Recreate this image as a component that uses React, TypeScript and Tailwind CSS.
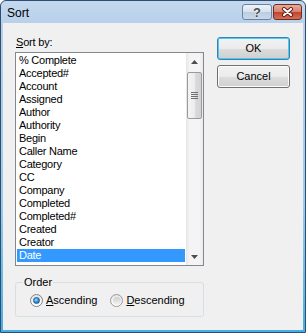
const fields = [
  "% Complete",
  "Accepted#",
  "Account",
  "Assigned",
  "Author",
  "Authority",
  "Begin",
  "Caller Name",
  "Category",
  "CC",
  "Company",
  "Completed",
  "Completed#",
  "Created",
  "Creator",
  "Date",
];

function TitleBar() {
  return (
    <div className="h-[22px] flex items-start justify-between pl-[6px] pr-[3px] pt-[3px]">
      <span className="text-[12px] leading-[16px] mt-[1px] text-black">Sort</span>
      <div className="flex gap-[1px]">
        {/* help */}
        <div className="w-[30px] h-[16px] rounded-[3px] border border-[#6b83a0] bg-[linear-gradient(to_bottom,#eef3f9_0%,#d5e1ee_50%,#bccde1_51%,#c9d9ea_100%)] flex items-center justify-center">
          <span className="text-[13px] leading-[13px] font-bold text-[#4a4a4a] [text-shadow:0_0_1px_#fff,0_0_2px_#fff]">?</span>
        </div>
        {/* close */}
        <div className="w-[29px] h-[16px] rounded-[3px] border border-[#6e2c22] bg-[linear-gradient(to_bottom,#e9a99b_0%,#d9806d_50%,#c0432a_51%,#d2705a_100%)] flex items-center justify-center">
          <svg width="13" height="10" viewBox="0 0 13 10">
            <path d="M3 2 L10 8 M10 2 L3 8" stroke="#5a1d14" strokeWidth="4" strokeLinecap="round" />
            <path d="M3 2 L10 8 M10 2 L3 8" stroke="#ffffff" strokeWidth="2.2" strokeLinecap="round" />
          </svg>
        </div>
      </div>
    </div>
  );
}

function Arrow({ up }: { up?: boolean }) {
  return (
    <div className="h-[17px] flex items-center justify-center">
      <svg width="7" height="4" viewBox="0 0 7 4">
        {up ? <path d="M0 4 L3.5 0 L7 4 Z" fill="#4d4d4d" /> : <path d="M0 0 L3.5 4 L7 0 Z" fill="#4d4d4d" />}
      </svg>
    </div>
  );
}

function ScrollBar() {
  return (
    <div className="w-[17px] flex flex-col bg-[linear-gradient(to_right,#e6e6e6_0%,#f4f4f4_20%,#f4f4f4_80%,#e9e9e9_100%)]">
      <Arrow up />
      <div className="flex-1 pt-[2px] px-[1px]">
        <div className="h-[47px] rounded-[2px] border border-[#9a9a9a] bg-[linear-gradient(to_right,#f4f4f4_0%,#ececec_50%,#dcdcdc_51%,#d2d2d2_100%)] flex flex-col items-center justify-center gap-[1px]">
          {[0, 1, 2, 3].map((i) => (
            <div key={i} className="w-[7px] h-[1px] bg-[#6f6f6f]" />
          ))}
        </div>
      </div>
      <Arrow />
    </div>
  );
}

function Radio({ checked, label, mnemonic }: { checked?: boolean; label: string; mnemonic: string }) {
  return (
    <div className="flex items-center gap-[3px]">
      <div
        className={
          checked
            ? "w-[13px] h-[13px] rounded-full border border-[#7d8590] bg-[linear-gradient(to_bottom,#e4e4e4,#ffffff)] flex items-center justify-center"
            : "w-[13px] h-[13px] rounded-full border border-[#9a9a9a] bg-[linear-gradient(to_bottom,#e6e6e6,#ffffff)] flex items-center justify-center"
        }
      >
        {checked ? (
          <div className="w-[7px] h-[7px] rounded-full border border-[#1a5a8e] bg-[radial-gradient(circle_at_40%_35%,#9fdcff_0%,#3b9be0_45%,#0f4f8a_100%)]" />
        ) : (
          <div className="w-[8px] h-[8px] rounded-full bg-[linear-gradient(to_bottom,#cfcfcf,#f4f4f4)]" />
        )}
      </div>
      <span className="text-[11px] leading-[13px]">
        <span className="underline underline-offset-[1px]">{mnemonic}</span>
        {label}
      </span>
    </div>
  );
}

export default function App() {
  return (
    <div className="w-[306px] h-[333px] flex flex-col border border-[#2e4f70] rounded-t-[6px] bg-[linear-gradient(to_bottom,#c4d9ef_0px,#b8d0ea_22px,#9ccbec_200px,#45ade6_100%)] font-['Liberation_Sans',Arial,sans-serif] text-black select-none">
      <TitleBar />
      <div className="flex-1 mx-[2px] mb-[2px] bg-[#f0f0f0] flex gap-[13px] pl-[12px] pr-[12px] pt-[13px]">
        {/* left column */}
        <div className="w-[189px] flex flex-col">
          <div className="text-[11px] leading-[13px] ml-[1px] tracking-[-0.2px]">
            <span className="underline underline-offset-[1px]">S</span>ort by:
          </div>
          <div className="mt-[3px] h-[214px] border border-[#828790] bg-white flex">
            <div className="flex-1 p-[1px] overflow-hidden">
              {fields.map((f) => (
                <div
                  key={f}
                  className={
                    f === "Date"
                      ? "h-[13px] px-[2px] text-[11px] leading-[13px] tracking-[-0.25px] whitespace-nowrap bg-[#3399ff] text-white"
                      : "h-[13px] px-[2px] text-[11px] leading-[13px] tracking-[-0.25px] whitespace-nowrap"
                  }
                >
                  {f}
                </div>
              ))}
            </div>
            <ScrollBar />
          </div>
          <fieldset className="mt-[10px] border border-[#d5dfe5] rounded-[3px] pl-[14px] pt-[5px] pb-[9px]">
            <legend className="-ml-[7px] px-[1px] text-[11px] leading-[13px]">Order</legend>
            <div className="flex gap-[13px]">
              <Radio checked mnemonic="A" label="scending" />
              <Radio mnemonic="D" label="escending" />
            </div>
          </fieldset>
        </div>
        {/* right column */}
        <div className="flex flex-col gap-[5px] pt-[1px]">
          <button className="w-[73px] h-[23px] rounded-[3px] border border-[#3c7fb1] shadow-[inset_0_0_0_1px_#48cbf5] bg-[linear-gradient(to_bottom,#f2f2f2_0%,#ebebeb_50%,#dddddd_51%,#cfcfcf_100%)] text-[11px] leading-[13px]">
            OK
          </button>
          <button className="w-[73px] h-[23px] rounded-[3px] border border-[#707070] shadow-[inset_0_0_0_1px_#fcfcfc] bg-[linear-gradient(to_bottom,#f2f2f2_0%,#ebebeb_50%,#dddddd_51%,#cfcfcf_100%)] text-[11px] leading-[13px]">
            Cancel
          </button>
        </div>
      </div>
    </div>
  );
}
